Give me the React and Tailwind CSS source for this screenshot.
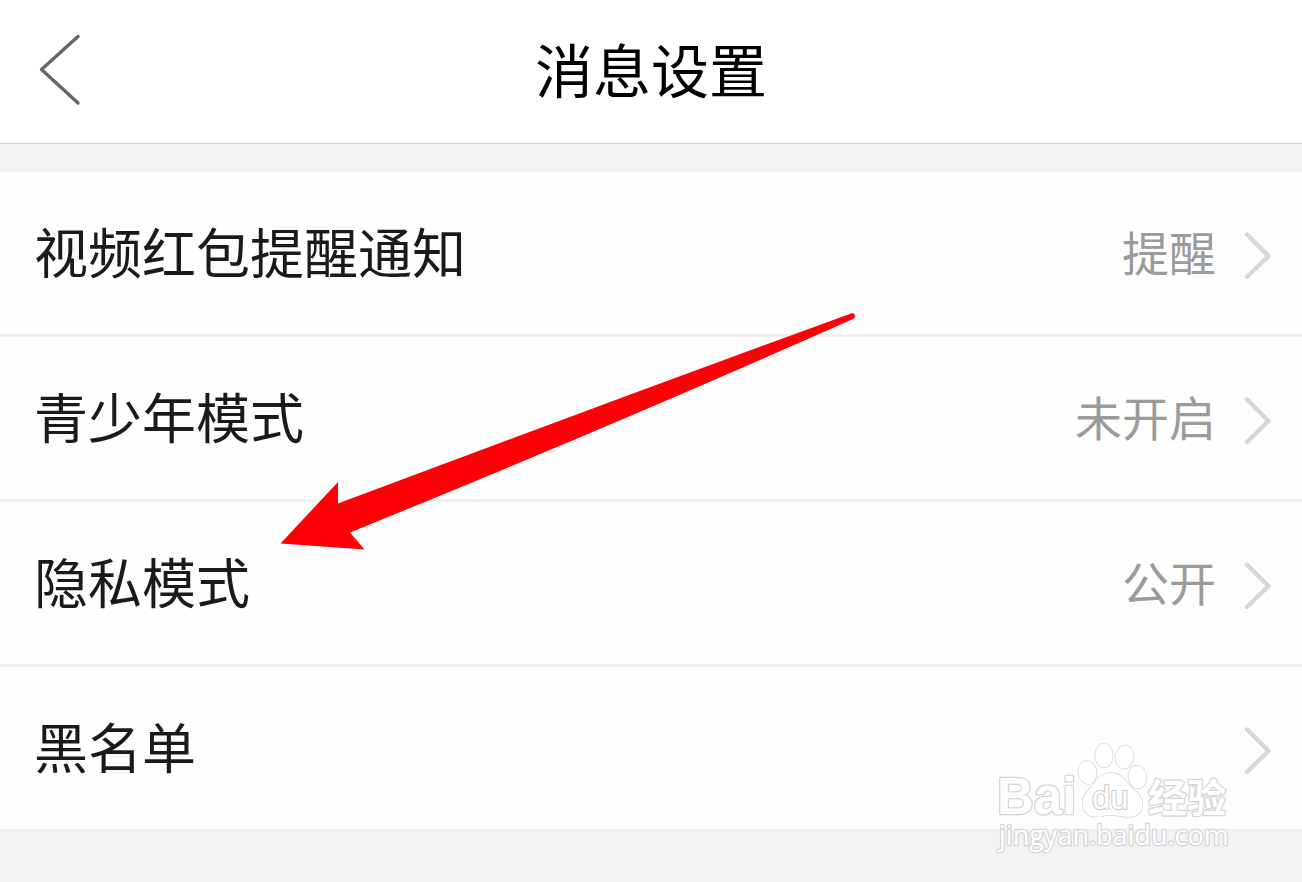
const rows = [
  { label: '视频红包提醒通知', value: '提醒' },
  { label: '青少年模式', value: '未开启' },
  { label: '隐私模式', value: '公开' },
  { label: '黑名单', value: '' },
]

function BackIcon() {
  return (
    <svg className="w-11 h-[72px]" viewBox="0 0 44 72" fill="none" stroke="#666666" strokeWidth={3.4} strokeLinecap="round" strokeLinejoin="round">
      <path d="M40 2.5L3.5 35.5L40 69" />
    </svg>
  )
}

function ChevronIcon() {
  return (
    <svg className="w-7 h-12 shrink-0" viewBox="0 0 28 48" fill="none" stroke="#d6d6d6" strokeWidth={4.4} strokeLinecap="round" strokeLinejoin="round">
      <path d="M3 3.5L24.5 25L3 46" />
    </svg>
  )
}

function SettingRow({ label, value }) {
  return (
    <li className="border-b-3 border-[#f0f0f0] last:border-b-0">
      <button type="button" className="flex w-full items-center justify-between pt-[49px] pb-[45px] pl-[34px] pr-[30px] text-left">
        <span className="pb-2 text-[54px] leading-[60px] text-[#1a1a1a]">{label}</span>
        <span className="flex items-center gap-7">
          {value && <span className="pb-2 text-[47px] leading-[60px] text-[#9b9b9b]">{value}</span>}
          <ChevronIcon />
        </span>
      </button>
    </li>
  )
}

function Arrow() {
  return (
    <svg className="pointer-events-none absolute left-[280px] top-[140px] w-[576px] h-[240px]" viewBox="0 0 576 240" fill="#ff0007">
      <path d="M0.5 231.5L58 170V191.5Q315 95 571 1.5C575 0.5 576.5 5 573 7Q330 115 70 220.5L84.5 237.5Z" />
    </svg>
  )
}

function Watermark() {
  return (
    <svg
      className="pointer-events-none absolute -bottom-[30px] right-[66px] w-60 h-[120px]"
      viewBox="0 0 240 120"
      fill="#ffffff"
      stroke="#d6d6d6"
      strokeWidth={2.6}
      strokeLinejoin="round"
      paintOrder="stroke"
    >
      <text x="1" y="75" fontFamily="Liberation Sans" fontWeight="700" fontSize="51">Bai</text>
      <g strokeWidth={1.5}>
        <ellipse cx="91.5" cy="33.5" rx="9" ry="11.5" transform="rotate(-8 91.5 33.5)" />
        <ellipse cx="108" cy="16.5" rx="8.7" ry="12" />
        <ellipse cx="128.5" cy="18" rx="9" ry="11.5" transform="rotate(8 128.5 18)" />
        <ellipse cx="141.5" cy="38" rx="9" ry="11.3" transform="rotate(-8 141.5 38)" />
        <path d="M99 43C105 32 122 31 129 41C133 47 138 50 143 56C149 64 147 75 137 77.5C130 79 122 76 115 76C108 76 102 79 95 77C86 74 84 62 90 54C93 50 97 47 99 43Z" />
      </g>
      <text x="96" y="70" fontFamily="Liberation Sans" fontSize="33" stroke="#cdcdcd" strokeWidth={2.2}>du</text>
      <text x="152" y="73" fontFamily="Noto Sans CJK SC" fontWeight="700" fontSize="39">经验</text>
      <text x="3" y="106" fontFamily="Open Sans" fontWeight="400" fontSize="27">jingyan.baidu.com</text>
    </svg>
  )
}

export default function App() {
  return (
    <div className="min-h-screen bg-[#f3f3f3] font-['Noto_Sans_CJK_SC',sans-serif]">
      <header className="grid grid-cols-[1fr_auto_1fr] items-center border-b border-[#cfcfcf] bg-white px-[38px] pt-8 pb-[35px]">
        <button type="button" aria-label="返回" className="justify-self-start">
          <BackIcon />
        </button>
        <h1 className="pb-1 text-[58px] leading-[72px] text-black">消息设置</h1>
      </header>

      <main className="relative mt-7">
        <ul className="bg-[#fefefe]">
          {rows.map((row) => (
            <SettingRow key={row.label} label={row.label} value={row.value} />
          ))}
        </ul>
        <Arrow />
        <Watermark />
      </main>
    </div>
  )
}
